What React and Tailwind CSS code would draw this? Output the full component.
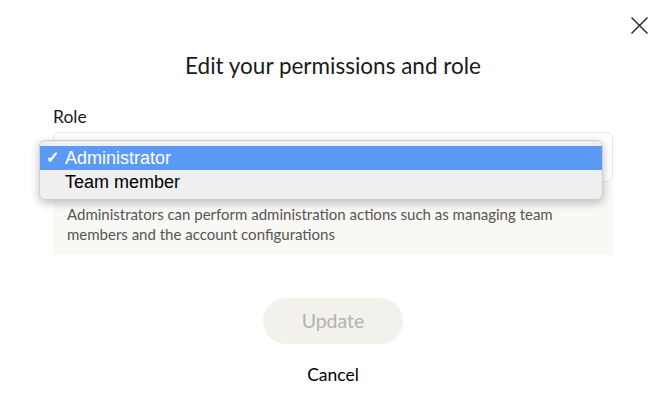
const options = [
  { label: 'Administrator', selected: true },
  { label: 'Team member', selected: false },
];

export default function App() {
  return (
    <div className="relative w-[661px] h-[414px] bg-white font-['Lato',sans-serif] text-[#1a1a1a]">
      {/* Close */}
      <button className="absolute left-[630px] top-[16px] text-[#222]">
        <svg width="19" height="19" viewBox="0 0 19 19" fill="none" stroke="currentColor" strokeWidth="1.4">
          <path d="M1.5 1.5 L17.5 17.5 M17.5 1.5 L1.5 17.5" />
        </svg>
      </button>

      <div className="flex flex-col pl-[53px] pr-[48px] pt-[51px]">
        <h1 className="text-center text-[22.5px] leading-[30px]">Edit your permissions and role</h1>

        <label className="mt-[24px] text-[17.5px] leading-[24px]">Role</label>

        <div className="relative mt-[3px]">
          {/* Select field */}
          <div className="h-[50px] rounded-[6px] border border-[#e8e6e1] bg-white" />

          {/* Info */}
          <div className="bg-[#f9f8f5] px-[14px] pt-[22px] pb-[11px] text-[15px] leading-[20px] text-[#555]">
            Administrators can perform administration actions such as managing team members and the account configurations
          </div>

          {/* Native dropdown menu */}
          <div className="absolute left-[-14px] top-[8px] w-[564px] rounded-[6px] border border-[#cfcfcf] bg-[#efefef] py-[5px] font-['Liberation_Sans',sans-serif] text-[18px] shadow-[0_3px_10px_rgba(0,0,0,0.25)]">
            {options.map((o) => (
              <div
                key={o.label}
                className={`flex h-[24px] items-center ${o.selected ? 'bg-[#5c9bf5] text-white' : 'text-black'}`}
              >
                <span className="w-[25px] pl-[6px] text-[16px] font-bold">{o.selected ? '✓' : ''}</span>
                <span>{o.label}</span>
              </div>
            ))}
          </div>
        </div>

        <div className="mt-[43px] flex flex-col items-center">
          <button className="h-[46px] w-[140px] rounded-full bg-[#f2f1ec] text-[19.5px] text-[#b3b1ab]">Update</button>
          <button className="mt-[18px] text-[17.5px] text-black">Cancel</button>
        </div>
      </div>
    </div>
  );
}
